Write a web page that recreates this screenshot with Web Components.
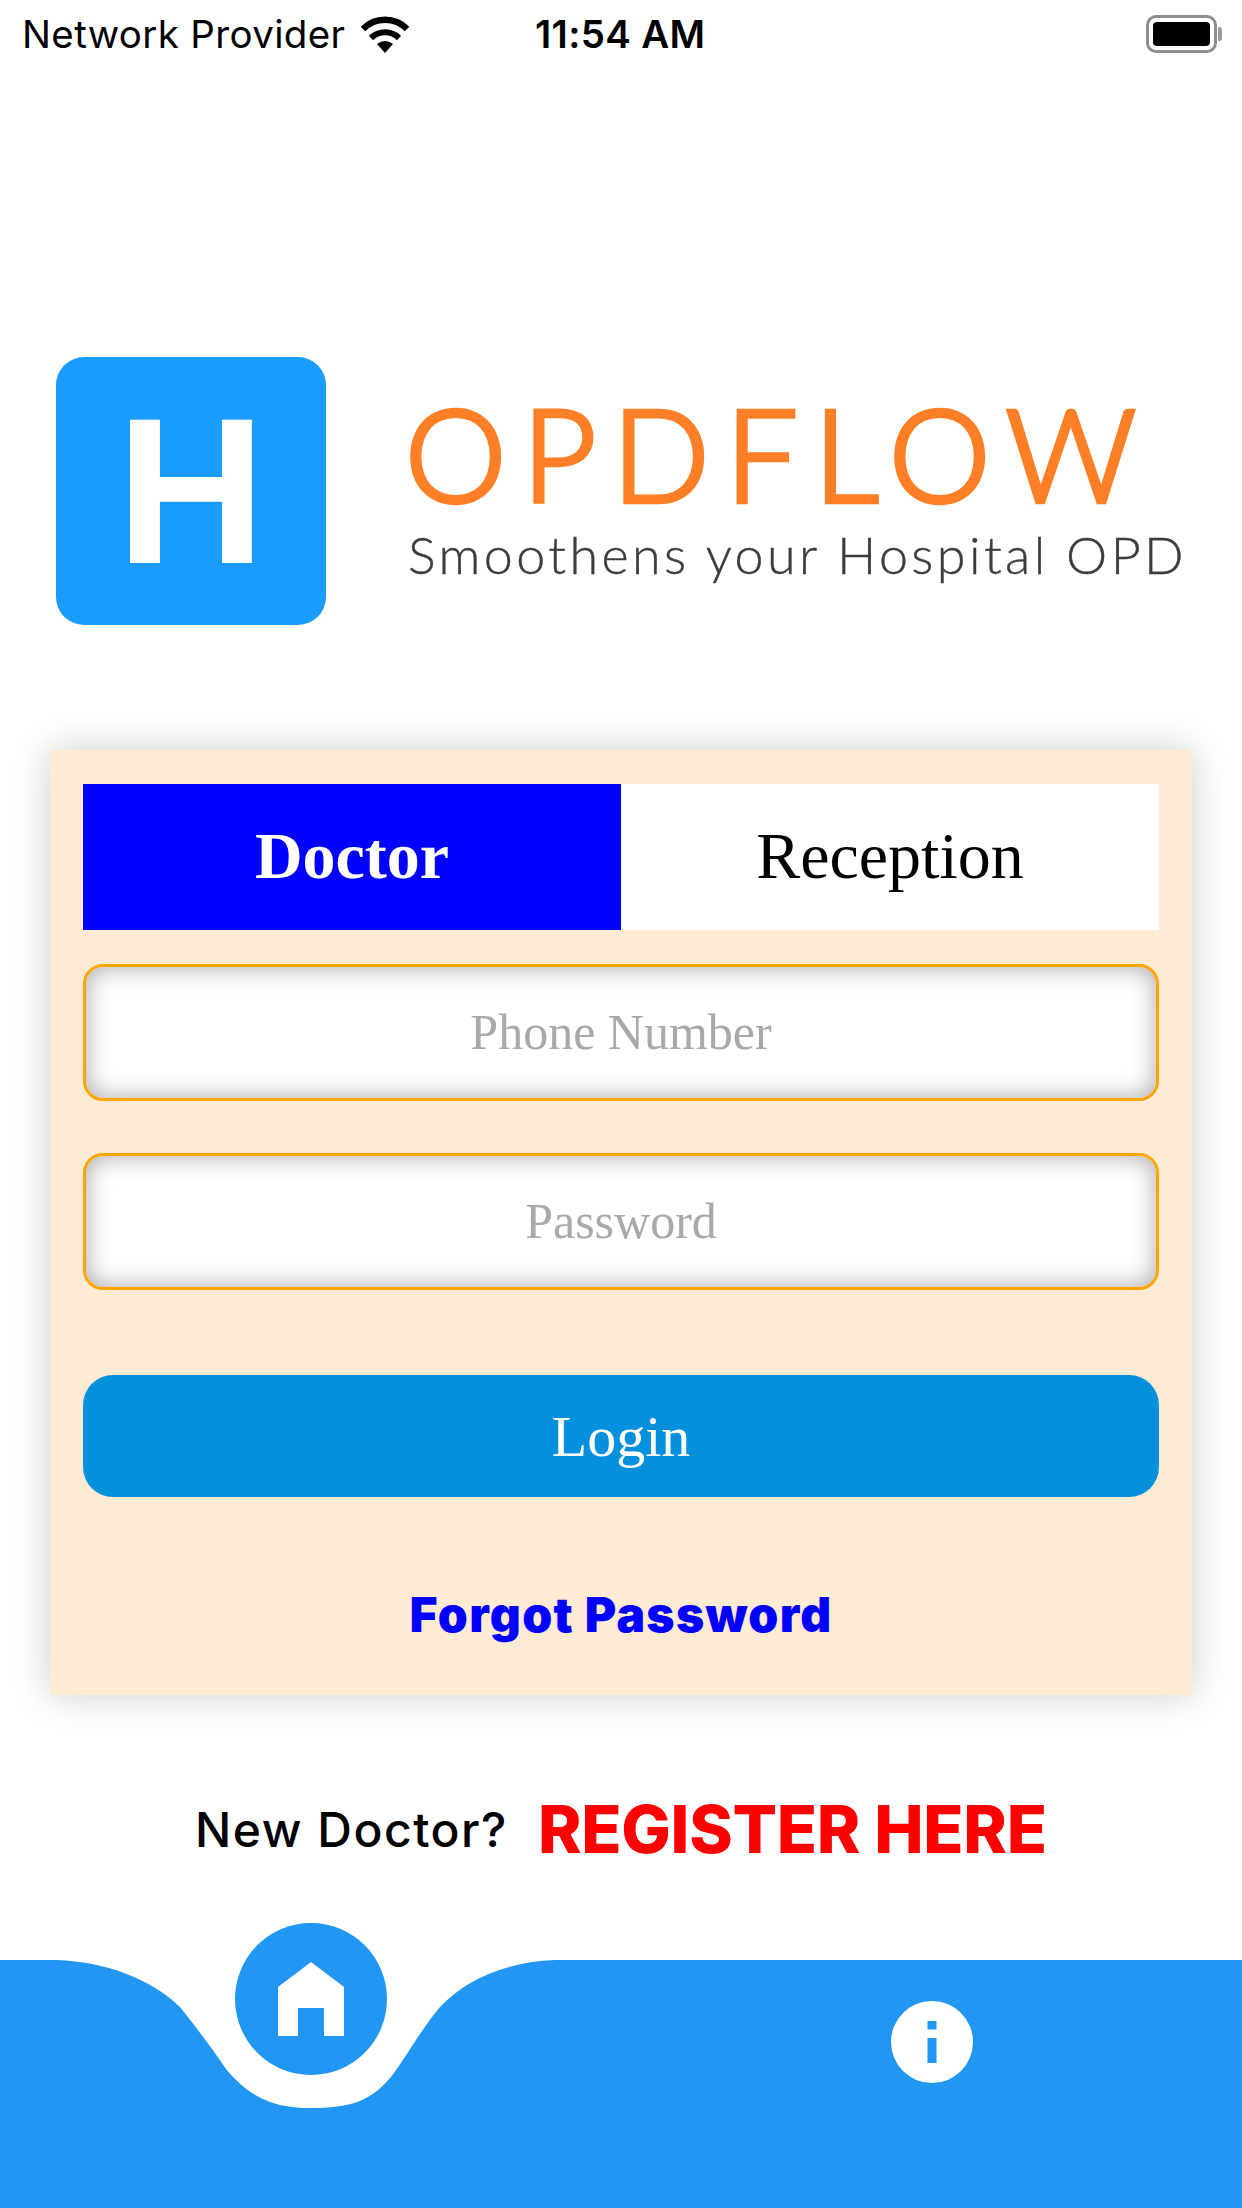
<!DOCTYPE html>
<html lang="en">
<head>
<meta charset="utf-8">
<title>OPDFLOW</title>
<style>
  html, body { margin: 0; padding: 0; background: #fff; }
  body { width: 1242px; height: 2208px; overflow: hidden; }
</style>
</head>
<body>
<login-screen>
  <status-bar></status-bar>
  <brand-logo></brand-logo>
  <login-card>
    <role-tabs slot="tabs"></role-tabs>
    <text-field>Phone Number</text-field>
    <text-field>Password</text-field>
    <login-button>Login</login-button>
    <span slot="forgot">Forgot Password</span>
  </login-card>
  <register-row></register-row>
  <bottom-nav></bottom-nav>
</login-screen>

<script>
class LoginScreen extends HTMLElement {
  connectedCallback() {
    this.attachShadow({ mode: 'open' });
    this.shadowRoot.innerHTML = `
      <style>
        :host {
          display: flex;
          flex-direction: column;
          width: 1242px;
          height: 2208px;
          background: #fff;
        }
      </style>
      <slot></slot>
    `;
  }
}

class StatusBar extends HTMLElement {
  connectedCallback() {
    this.attachShadow({ mode: 'open' });
    this.shadowRoot.innerHTML = `
      <style>
        :host {
          display: grid;
          grid-template-columns: 513px 1fr auto;
          align-items: center;
          height: 68px;
          padding: 0 20px 0 22px;
          font-family: Inter, "Liberation Sans", sans-serif;
          font-size: 38.5px;
          color: #000;
        }
        .left { display: flex; align-items: center; gap: 15px; }
        .carrier { letter-spacing: 0.35px; }
        .time { font-weight: 600; letter-spacing: 0.3px; }
        .battery { display: flex; align-items: center; gap: 1px; }
        .shell {
          box-sizing: border-box;
          width: 71px;
          height: 38px;
          border: 3px solid #8e8e8e;
          border-radius: 10px;
          padding: 4px;
          display: flex;
        }
        .level { flex: 1; background: #000; border-radius: 4px; }
        .nub { width: 4px; height: 14px; background: #9a9a9a; border-radius: 0 3px 3px 0; }
      </style>
      <div class="left">
        <span class="carrier">Network Provider</span>
        <svg width="50" height="37" viewBox="0 0 50 37">
          <path d="M3 13 A31 31 0 0 1 47 13" fill="none" stroke="#000" stroke-width="6.5"/>
          <path d="M11 22 A20 20 0 0 1 39 22" fill="none" stroke="#000" stroke-width="6"/>
          <path d="M25 37 L17 28 Q25 22 33 28 Z" fill="#000"/>
        </svg>
      </div>
      <span class="time">11:54 AM</span>
      <div class="battery"><div class="shell"><div class="level"></div></div><div class="nub"></div></div>
    `;
  }
}

class BrandLogo extends HTMLElement {
  connectedCallback() {
    this.attachShadow({ mode: 'open' });
    this.shadowRoot.innerHTML = `
      <style>
        :host {
          display: flex;
          align-items: flex-start;
          gap: 79px;
          margin-top: 289px;
          padding-left: 56px;
          height: 393px;
          font-family: Lato, "Liberation Sans", sans-serif;
        }
        .mark {
          width: 270px;
          height: 268px;
          border-radius: 28px;
          background: #1a9cff;
          color: #fff;
          display: flex;
          align-items: center;
          justify-content: center;
          font-family: "Liberation Sans", Arial, sans-serif;
          font-weight: 700;
          font-size: 207px;
          line-height: 1;
        }
        .words { display: flex; flex-direction: column; padding-top: 31px; }
        .name {
          font-size: 128px;
          line-height: 130px;
          font-weight: 300;
          color: #ff7f27;
          letter-spacing: 16px;
          -webkit-text-stroke: 4.5px #ff7f27;
          white-space: nowrap;
        }
        .tag {
          font-size: 52px;
          line-height: 62px;
          font-weight: 300;
          color: #3c3c3c;
          letter-spacing: 3.4px;
          -webkit-text-stroke: 0.4px #3c3c3c;
          white-space: nowrap;
          margin: 5px 0 0 3px;
        }
      </style>
      <div class="mark">H</div>
      <div class="words">
        <div class="name">OPDFLOW</div>
        <div class="tag">Smoothens your Hospital OPD</div>
      </div>
    `;
  }
}

class LoginCard extends HTMLElement {
  connectedCallback() {
    this.attachShadow({ mode: 'open' });
    this.shadowRoot.innerHTML = `
      <style>
        :host {
          display: flex;
          flex-direction: column;
          box-sizing: border-box;
          width: 1142px;
          height: 945px;
          margin-left: 50px;
          padding: 34px 33px 0;
          background: #ffebd3;
          box-shadow: 0 0 36px rgba(0, 0, 0, 0.2);
        }
        .fields { display: flex; flex-direction: column; gap: 52px; margin-top: 34px; }
        .forgot {
          margin-top: 90px;
          text-align: center;
          font-family: Inter, "Liberation Sans", sans-serif;
          font-size: 48px;
          line-height: 56px;
          font-weight: 900;
          letter-spacing: 1.3px;
          color: #0000ff;
        }
      </style>
      <slot name="tabs"></slot>
      <div class="fields"><slot></slot></div>
      <div class="forgot"><slot name="forgot"></slot></div>
    `;
  }
}

class RoleTabs extends HTMLElement {
  connectedCallback() {
    this.attachShadow({ mode: 'open' });
    this.shadowRoot.innerHTML = `
      <style>
        :host {
          display: grid;
          grid-template-columns: 538px 538px;
          height: 146px;
          font-family: "Liberation Serif", "Times New Roman", serif;
          font-size: 66px;
        }
        div { display: flex; align-items: center; justify-content: center; padding-bottom: 2px; }
        .on { background: #0000ff; color: #fff; font-weight: 700; }
        .off { background: #fff; color: #000; }
      </style>
      <div class="on">Doctor</div>
      <div class="off">Reception</div>
    `;
  }
}

class TextField extends HTMLElement {
  connectedCallback() {
    this.attachShadow({ mode: 'open' });
    this.shadowRoot.innerHTML = `
      <style>
        :host {
          display: flex;
          align-items: center;
          justify-content: center;
          box-sizing: border-box;
          height: 137px;
          padding-bottom: 2px;
          background: #fff;
          border: 3px solid #ffa500;
          border-radius: 20px;
          box-shadow: inset 0 0 24px rgba(0, 0, 0, 0.35);
          font-family: "Liberation Serif", "Times New Roman", serif;
          font-size: 50px;
          color: #a9a9a9;
        }
      </style>
      <slot></slot>
    `;
  }
}

class LoginButton extends HTMLElement {
  connectedCallback() {
    this.attachShadow({ mode: 'open' });
    this.shadowRoot.innerHTML = `
      <style>
        :host {
          display: flex;
          align-items: center;
          justify-content: center;
          height: 122px;
          margin-top: 33px;
          background: #0590de;
          border-radius: 30px;
          font-family: "Liberation Serif", "Times New Roman", serif;
          font-size: 58px;
          color: #fff;
        }
      </style>
      <slot></slot>
    `;
  }
}

class RegisterRow extends HTMLElement {
  connectedCallback() {
    this.attachShadow({ mode: 'open' });
    this.shadowRoot.innerHTML = `
      <style>
        :host {
          display: flex;
          align-items: center;
          gap: 30px;
          height: 80px;
          margin-top: 94px;
          padding-left: 195px;
          font-family: Inter, "Liberation Sans", sans-serif;
          white-space: nowrap;
        }
        .ask { font-size: 48px; font-weight: 500; letter-spacing: 1.5px; color: #000; }
        .link { font-size: 66px; font-weight: 800; letter-spacing: -0.3px; color: #ff0000; }
      </style>
      <span class="ask">New Doctor?</span>
      <span class="link">REGISTER HERE</span>
    `;
  }
}

class BottomNav extends HTMLElement {
  connectedCallback() {
    this.attachShadow({ mode: 'open' });
    this.shadowRoot.innerHTML = `
      <style>
        :host {
          display: grid;
          grid-template-columns: 621px 621px;
          position: relative;
          height: 285px;
          margin-top: auto;
        }
        .wave { position: absolute; left: 0; top: 0; }
        .item { position: relative; display: flex; justify-content: center; }
        .home {
          width: 152px;
          height: 152px;
          border-radius: 50%;
          background: #2196f3;
          display: flex;
          align-items: center;
          justify-content: center;
        }
        .info { margin-top: 78px; }
      </style>
      <svg class="wave" width="1242" height="285" viewBox="0 1923 1242 285">
        <path fill="#2196f3" d="M0 1960 H57 C105 1962 150 1978 180 2007 C192 2022 212 2048 226 2069 C250 2098 275 2108 310 2108 C350 2108 372 2102 394 2073 C408 2053 424 2026 440 2007 C465 1980 505 1962 555 1960 H1242 V2208 H0 Z"/>
      </svg>
      <div class="item">
        <div class="home">
          <svg width="66" height="74" viewBox="0 0 66 74">
            <path fill="#fff" d="M33 0 L66 25 V74 H46 V46 H20 V74 H0 V25 Z"/>
          </svg>
        </div>
      </div>
      <div class="item">
        <svg class="info" width="82" height="82" viewBox="0 0 82 82">
          <circle cx="41" cy="41" r="41" fill="#fff"/>
          <rect x="36.5" y="20" width="9" height="8.5" fill="#2196f3"/>
          <rect x="36.5" y="37" width="9" height="25" fill="#2196f3"/>
        </svg>
      </div>
    `;
  }
}

customElements.define('login-screen', LoginScreen);
customElements.define('status-bar', StatusBar);
customElements.define('brand-logo', BrandLogo);
customElements.define('login-card', LoginCard);
customElements.define('role-tabs', RoleTabs);
customElements.define('text-field', TextField);
customElements.define('login-button', LoginButton);
customElements.define('register-row', RegisterRow);
customElements.define('bottom-nav', BottomNav);
</script>
</body>
</html>
